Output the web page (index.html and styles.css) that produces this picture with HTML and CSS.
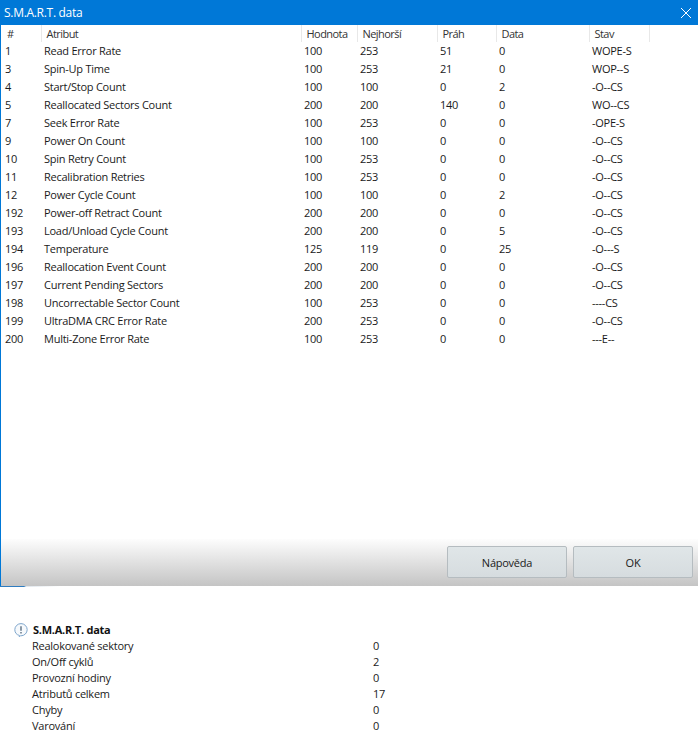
FILE: index.html
```html
<!DOCTYPE html>
<html lang="cs">
<head>
<meta charset="utf-8">
<title>S.M.A.R.T. data</title>
<link rel="stylesheet" href="styles.css">
</head>
<body>
<section class="window">
  <header class="titlebar">
    <span class="title">S.M.A.R.T. data</span>
    <svg class="close" width="12" height="12" viewBox="0 0 12 12"><path d="M1 1l10 10M11 1L1 11" stroke="#fff" stroke-width="1" fill="none"/></svg>
  </header>
  <div class="content">
    <table class="grid">
      <colgroup><col class="c1"><col class="c2"><col class="c3"><col class="c4"><col class="c5"><col class="c6"><col class="c7"></colgroup>
      <thead><tr><th>#</th><th>Atribut</th><th>Hodnota</th><th>Nejhorší</th><th>Práh</th><th>Data</th><th>Stav</th></tr></thead>
      <tbody>
        <tr><td>1</td><td>Read Error Rate</td><td>100</td><td>253</td><td>51</td><td>0</td><td>WOPE-S</td></tr>
        <tr><td>3</td><td>Spin-Up Time</td><td>100</td><td>253</td><td>21</td><td>0</td><td>WOP--S</td></tr>
        <tr><td>4</td><td>Start/Stop Count</td><td>100</td><td>100</td><td>0</td><td>2</td><td>-O--CS</td></tr>
        <tr><td>5</td><td>Reallocated Sectors Count</td><td>200</td><td>200</td><td>140</td><td>0</td><td>WO--CS</td></tr>
        <tr><td>7</td><td>Seek Error Rate</td><td>100</td><td>253</td><td>0</td><td>0</td><td>-OPE-S</td></tr>
        <tr><td>9</td><td>Power On Count</td><td>100</td><td>100</td><td>0</td><td>0</td><td>-O--CS</td></tr>
        <tr><td>10</td><td>Spin Retry Count</td><td>100</td><td>253</td><td>0</td><td>0</td><td>-O--CS</td></tr>
        <tr><td>11</td><td>Recalibration Retries</td><td>100</td><td>253</td><td>0</td><td>0</td><td>-O--CS</td></tr>
        <tr><td>12</td><td>Power Cycle Count</td><td>100</td><td>100</td><td>0</td><td>2</td><td>-O--CS</td></tr>
        <tr><td>192</td><td>Power-off Retract Count</td><td>200</td><td>200</td><td>0</td><td>0</td><td>-O--CS</td></tr>
        <tr><td>193</td><td>Load/Unload Cycle Count</td><td>200</td><td>200</td><td>0</td><td>5</td><td>-O--CS</td></tr>
        <tr><td>194</td><td>Temperature</td><td>125</td><td>119</td><td>0</td><td>25</td><td>-O---S</td></tr>
        <tr><td>196</td><td>Reallocation Event Count</td><td>200</td><td>200</td><td>0</td><td>0</td><td>-O--CS</td></tr>
        <tr><td>197</td><td>Current Pending Sectors</td><td>200</td><td>200</td><td>0</td><td>0</td><td>-O--CS</td></tr>
        <tr><td>198</td><td>Uncorrectable Sector Count</td><td>100</td><td>253</td><td>0</td><td>0</td><td>----CS</td></tr>
        <tr><td>199</td><td>UltraDMA CRC Error Rate</td><td>200</td><td>253</td><td>0</td><td>0</td><td>-O--CS</td></tr>
        <tr><td>200</td><td>Multi-Zone Error Rate</td><td>100</td><td>253</td><td>0</td><td>0</td><td>---E--</td></tr>
      </tbody>
    </table>
    <footer class="actions">
      <button class="btn">Nápověda</button>
      <button class="btn">OK</button>
    </footer>
  </div>
  <div class="edge"></div>
</section>
<section class="summary">
  <h2 class="summary-title">
    <svg class="info" width="14" height="14" viewBox="0 0 14 14"><path d="M7 .6a6.2 6.2 0 0 1 6.2 6.1A6.2 6.2 0 0 1 7 12.8h-.5l-1.3 1 .3-1.3A6.2 6.2 0 0 1 .8 6.7 6.2 6.2 0 0 1 7 .6z" fill="#f6f9fc" stroke="#7fa6cc"/><path d="M7 3.2v4.6M7 9.1v1.4" stroke="#4f6478" stroke-width="1.3"/></svg>
    S.M.A.R.T. data
  </h2>
  <dl class="facts">
    <dt>Realokované sektory</dt><dd>0</dd>
    <dt>On/Off cyklů</dt><dd>2</dd>
    <dt>Provozní hodiny</dt><dd>0</dd>
    <dt>Atributů celkem</dt><dd>17</dd>
    <dt>Chyby</dt><dd>0</dd>
    <dt>Varování</dt><dd>0</dd>
  </dl>
</section>
</body>
</html>
```

FILE: styles.css
```css
* { box-sizing: border-box; }
html, body { margin: 0; padding: 0; }
body {
  width: 698px;
  height: 753px;
  overflow: hidden;
  background: #fff;
  color: #1a1a1a;
  font: 11px/16px "Open Sans", "Noto Sans", "DejaVu Sans", sans-serif;
  letter-spacing: -0.25px;
}
.window { height: 587px; display: flex; flex-direction: column; }
.titlebar {
  height: 25px;
  flex: none;
  background: #0078d7;
  color: #fff;
  display: flex;
  align-items: center;
  justify-content: space-between;
  padding: 0 6px 0 4px;
  font-size: 12px;
  letter-spacing: -0.3px;
}
.content {
  flex: 1;
  display: flex;
  flex-direction: column;
  justify-content: space-between;
  border-left: 1px solid #0078d7;
  min-height: 0;
}
.edge {
  height: 1px;
  flex: none;
  background: linear-gradient(to right, #2f7cc0 24px, #dfe6ec 26px, #fff 60px);
}
.grid { border-collapse: collapse; table-layout: fixed; width: 648px; }
.c1 { width: 40px; } .c2 { width: 260px; } .c3 { width: 56px; } .c4 { width: 80px; }
.c5 { width: 59px; } .c6 { width: 93px; } .c7 { width: 60px; }
.grid th {
  height: 17px;
  padding: 0 0 0 5px;
  font-weight: 400;
  text-align: left;
  color: #333;
  letter-spacing: -0.55px;
  border-right: 1px solid #e8e8e8;
  background: #fff;
}
.grid th:first-child { padding-left: 6px; }
.grid td { height: 18px; padding: 0 0 0 3px; white-space: nowrap; }
.grid td:first-child { padding-left: 4px; }
.actions {
  height: 47px;
  flex: none;
  display: flex;
  justify-content: flex-end;
  gap: 6px;
  padding: 7px 5px 8px 0;
  background: linear-gradient(#fdfdfd, #c4c4c4);
}
.btn {
  width: 120px;
  height: 32px;
  border: 1px solid #b5bcc0;
  border-radius: 2px;
  background: linear-gradient(#e0e6e8, #d6dcdf);
  color: #1a1a1a;
  font: inherit;
  letter-spacing: inherit;
  padding: 2px 0 0;
}
.summary { padding: 35px 0 0 14px; }
.summary-title {
  margin: 0;
  font-size: 11px;
  line-height: 16px;
  font-weight: 700;
  color: #111;
  display: flex;
  align-items: center;
  gap: 5px;
}
.facts {
  margin: 0 0 0 18px;
  display: grid;
  grid-template-columns: 341px auto;
  grid-auto-rows: 16px;
  justify-content: start;
}
.facts dt, .facts dd { margin: 0; }
```
